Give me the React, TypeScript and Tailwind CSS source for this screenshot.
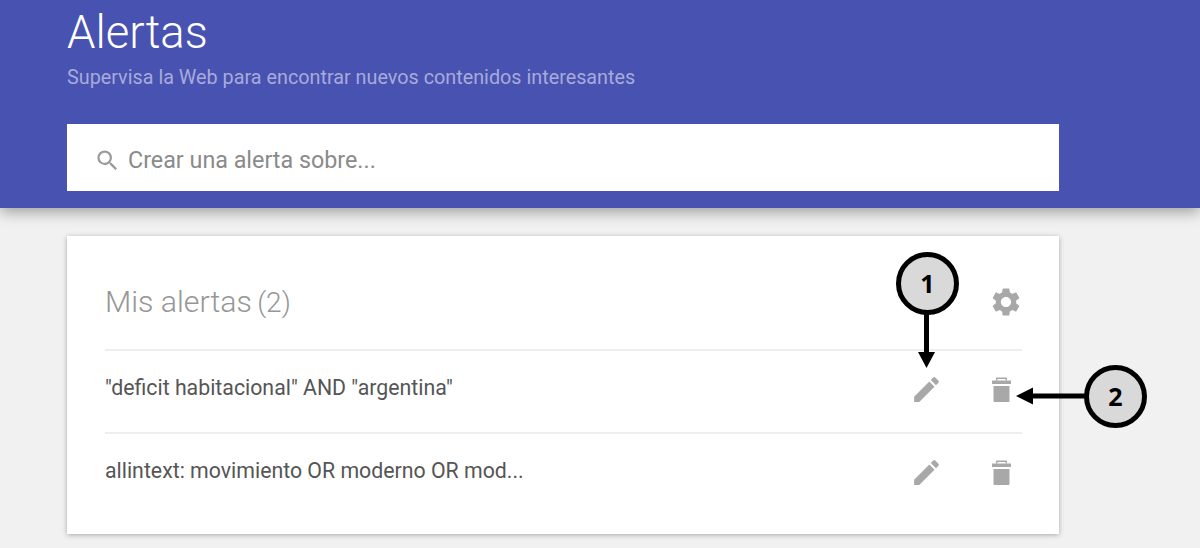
import { MdEdit, MdSearch, MdSettings } from "react-icons/md";

const alerts = [
  '"deficit habitacional" AND "argentina"',
  "allintext: movimiento OR moderno OR mod...",
];

function Callout({ n, className }: { n: number; className: string }) {
  return (
    <div
      className={`absolute flex h-[63px] w-[63px] items-center justify-center rounded-full border-[5px] border-black bg-[#d9d9d9] text-[25px] font-bold text-black ${className}`}
      style={{ fontFamily: '"Open Sans", sans-serif' }}
    >
      {n}
    </div>
  );
}

function TrashIcon() {
  return (
    <svg className="h-[25px] w-[19px] text-[#a8a8a8]" viewBox="0 0 19 25" fill="currentColor">
      <path d="M4 3.500V1.500Q4 .5 5 .5H14Q15 .5 15 1.500V3.500H13.500V2H5.500V3.500Z" />
      <path d="M0 3.500H19V7H0Z" />
      <path d="M1.500 9H17.500V24Q17.500 25 16.500 25H2.500Q1.500 25 1.500 24Z" />
    </svg>
  );
}

export default function App() {
  return (
    <div className="relative h-[548px] w-[1200px] overflow-hidden bg-[#f1f1f1] font-['Roboto',sans-serif]">
      {/* HEADER */}
      <header className="h-[208px] bg-[#4852b1] px-[67px] pt-[7px] shadow-[0_4px_14px_rgba(0,0,0,0.35)]">
        <h1 className="text-[45.500px] leading-[52px] font-light text-white">Alertas</h1>
        <p className="mt-[6px] text-[19.800px] leading-[26px] text-[#a7abdb]">
          Supervisa la Web para encontrar nuevos contenidos interesantes
        </p>

        {/* SEARCH */}
        <div className="mt-[33px] flex h-[67px] w-[992px] items-center bg-white pl-[27px]">
          <MdSearch className="mt-[6px] h-[27px] w-[27px] text-[#9a9a9a]" />
          <span className="ml-[7px] mt-[6px] text-[23.300px] text-[#8a8a8a]">Crear una alerta sobre...</span>
        </div>
      </header>

      {/* CARD */}
      <main className="ml-[67px] mt-[28px] h-[298px] w-[992px] bg-white pl-[38px] pr-[37px] shadow-[0_1px_5px_rgba(0,0,0,0.3)]">
        <div className="flex h-[115px] items-center justify-between border-b-2 border-[#eeeeee]">
          <h2 className="mt-[18px] text-[30.300px] font-light text-[#969696]">
            Mis alertas <span className="ml-[-2px] text-[28px]">(2)</span>
          </h2>
          <MdSettings className="ml-[1px] mr-[-1px] mt-[18px] h-[34px] w-[34px] text-[#a8a8a8]" />
        </div>

        {alerts.map((alert, i) => (
          <div
            key={i}
            className={`flex h-[83px] items-center border-b-2 ${i === 0 ? "border-[#eeeeee]" : "border-transparent"}`}
          >
            <span className="mb-[8px] flex-1 text-[21.300px] text-[#555555]">{alert}</span>
            <MdEdit className="mb-[4px] ml-0 h-[33px] w-[33px] text-[#a8a8a8]" />
            <div className="mb-[4px] ml-[49px] mr-[11px]">
              <TrashIcon />
            </div>
          </div>
        ))}
      </main>

      {/* ANNOTATIONS */}
      <Callout n={1} className="left-[896px] top-[252px]" />
      <Callout n={2} className="left-[1084px] top-[365px]" />
      <svg className="absolute left-0 top-0 h-[548px] w-[1200px]" viewBox="0 0 1200 548">
        <path d="M926.500 314V352" stroke="#000" strokeWidth="5" />
        <path d="M918 352H935L926.500 368Z" fill="#000" />
        <path d="M1086 396H1032" stroke="#000" strokeWidth="5" />
        <path d="M1033 387.500V404.500L1016 396Z" fill="#000" />
      </svg>
    </div>
  );
}
